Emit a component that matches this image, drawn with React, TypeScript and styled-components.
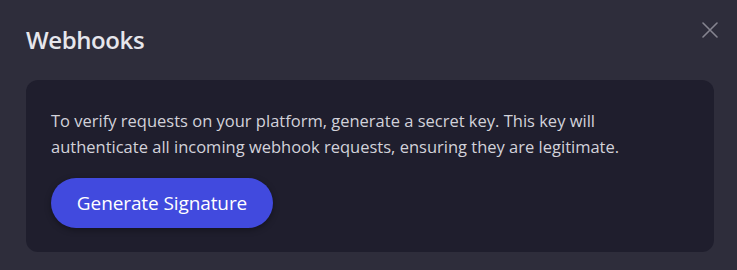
import React from "react";
import styled, { createGlobalStyle } from "styled-components";

const Global = createGlobalStyle`
  html, body { margin: 0; padding: 0; background: #2e2d3b; }
  body { font-family: "Open Sans", "Noto Sans", sans-serif; }
`;

const Dialog = styled.div`
  position: relative;
  width: 737px;
  height: 270px;
  box-sizing: border-box;
  padding: 23px 23px 18px 26px;
  background: #2e2d3b;
  display: flex;
  flex-direction: column;
`;

const Title = styled.h2`
  margin: 0;
  font-size: 24px;
  line-height: 33px;
  font-weight: 600;
  color: #e6e6ec;
  letter-spacing: -0.4px;
`;

const CloseButton = styled.button`
  position: absolute;
  top: 20px;
  right: 17px;
  width: 20px;
  height: 20px;
  padding: 0;
  border: none;
  background: transparent;
  color: #85848f;
  display: flex;
  align-items: center;
  justify-content: center;
  cursor: pointer;
`;

const Card = styled.section`
  margin-top: 24px;
  background: #1f1e2d;
  border-radius: 12px;
  padding: 28px 25px 24px 25px;
  display: flex;
  flex-direction: column;
  align-items: flex-start;
  gap: 18px;
`;

const Description = styled.p`
  margin: 0;
  font-size: 16.5px;
  line-height: 26px;
  color: #d2d2da;
  letter-spacing: 0;
`;

const PrimaryButton = styled.button`
  height: 50px;
  width: 222px;
  border: none;
  border-radius: 25px;
  background: #414ade;
  color: #ffffff;
  font-family: inherit;
  font-size: 19px;
  font-weight: 400;
  letter-spacing: -0.1px;
  box-shadow: 0 2px 6px rgba(0, 0, 0, 0.35);
  cursor: pointer;
`;

export default function App() {
  return (
    <>
      <Global />
      <Dialog>
        <Title>Webhooks</Title>
        <CloseButton aria-label="Close">
          <svg width="16" height="16" viewBox="0 0 16 16" fill="none">
            <path d="M1 1L15 15M15 1L1 15" stroke="currentColor" strokeWidth="1.6" strokeLinecap="round" />
          </svg>
        </CloseButton>
        <Card>
          <Description>
            To verify requests on your platform, generate a secret key. This key will
            <br />
            authenticate all incoming webhook requests, ensuring they are legitimate.
          </Description>
          <PrimaryButton>Generate Signature</PrimaryButton>
        </Card>
      </Dialog>
    </>
  );
}
